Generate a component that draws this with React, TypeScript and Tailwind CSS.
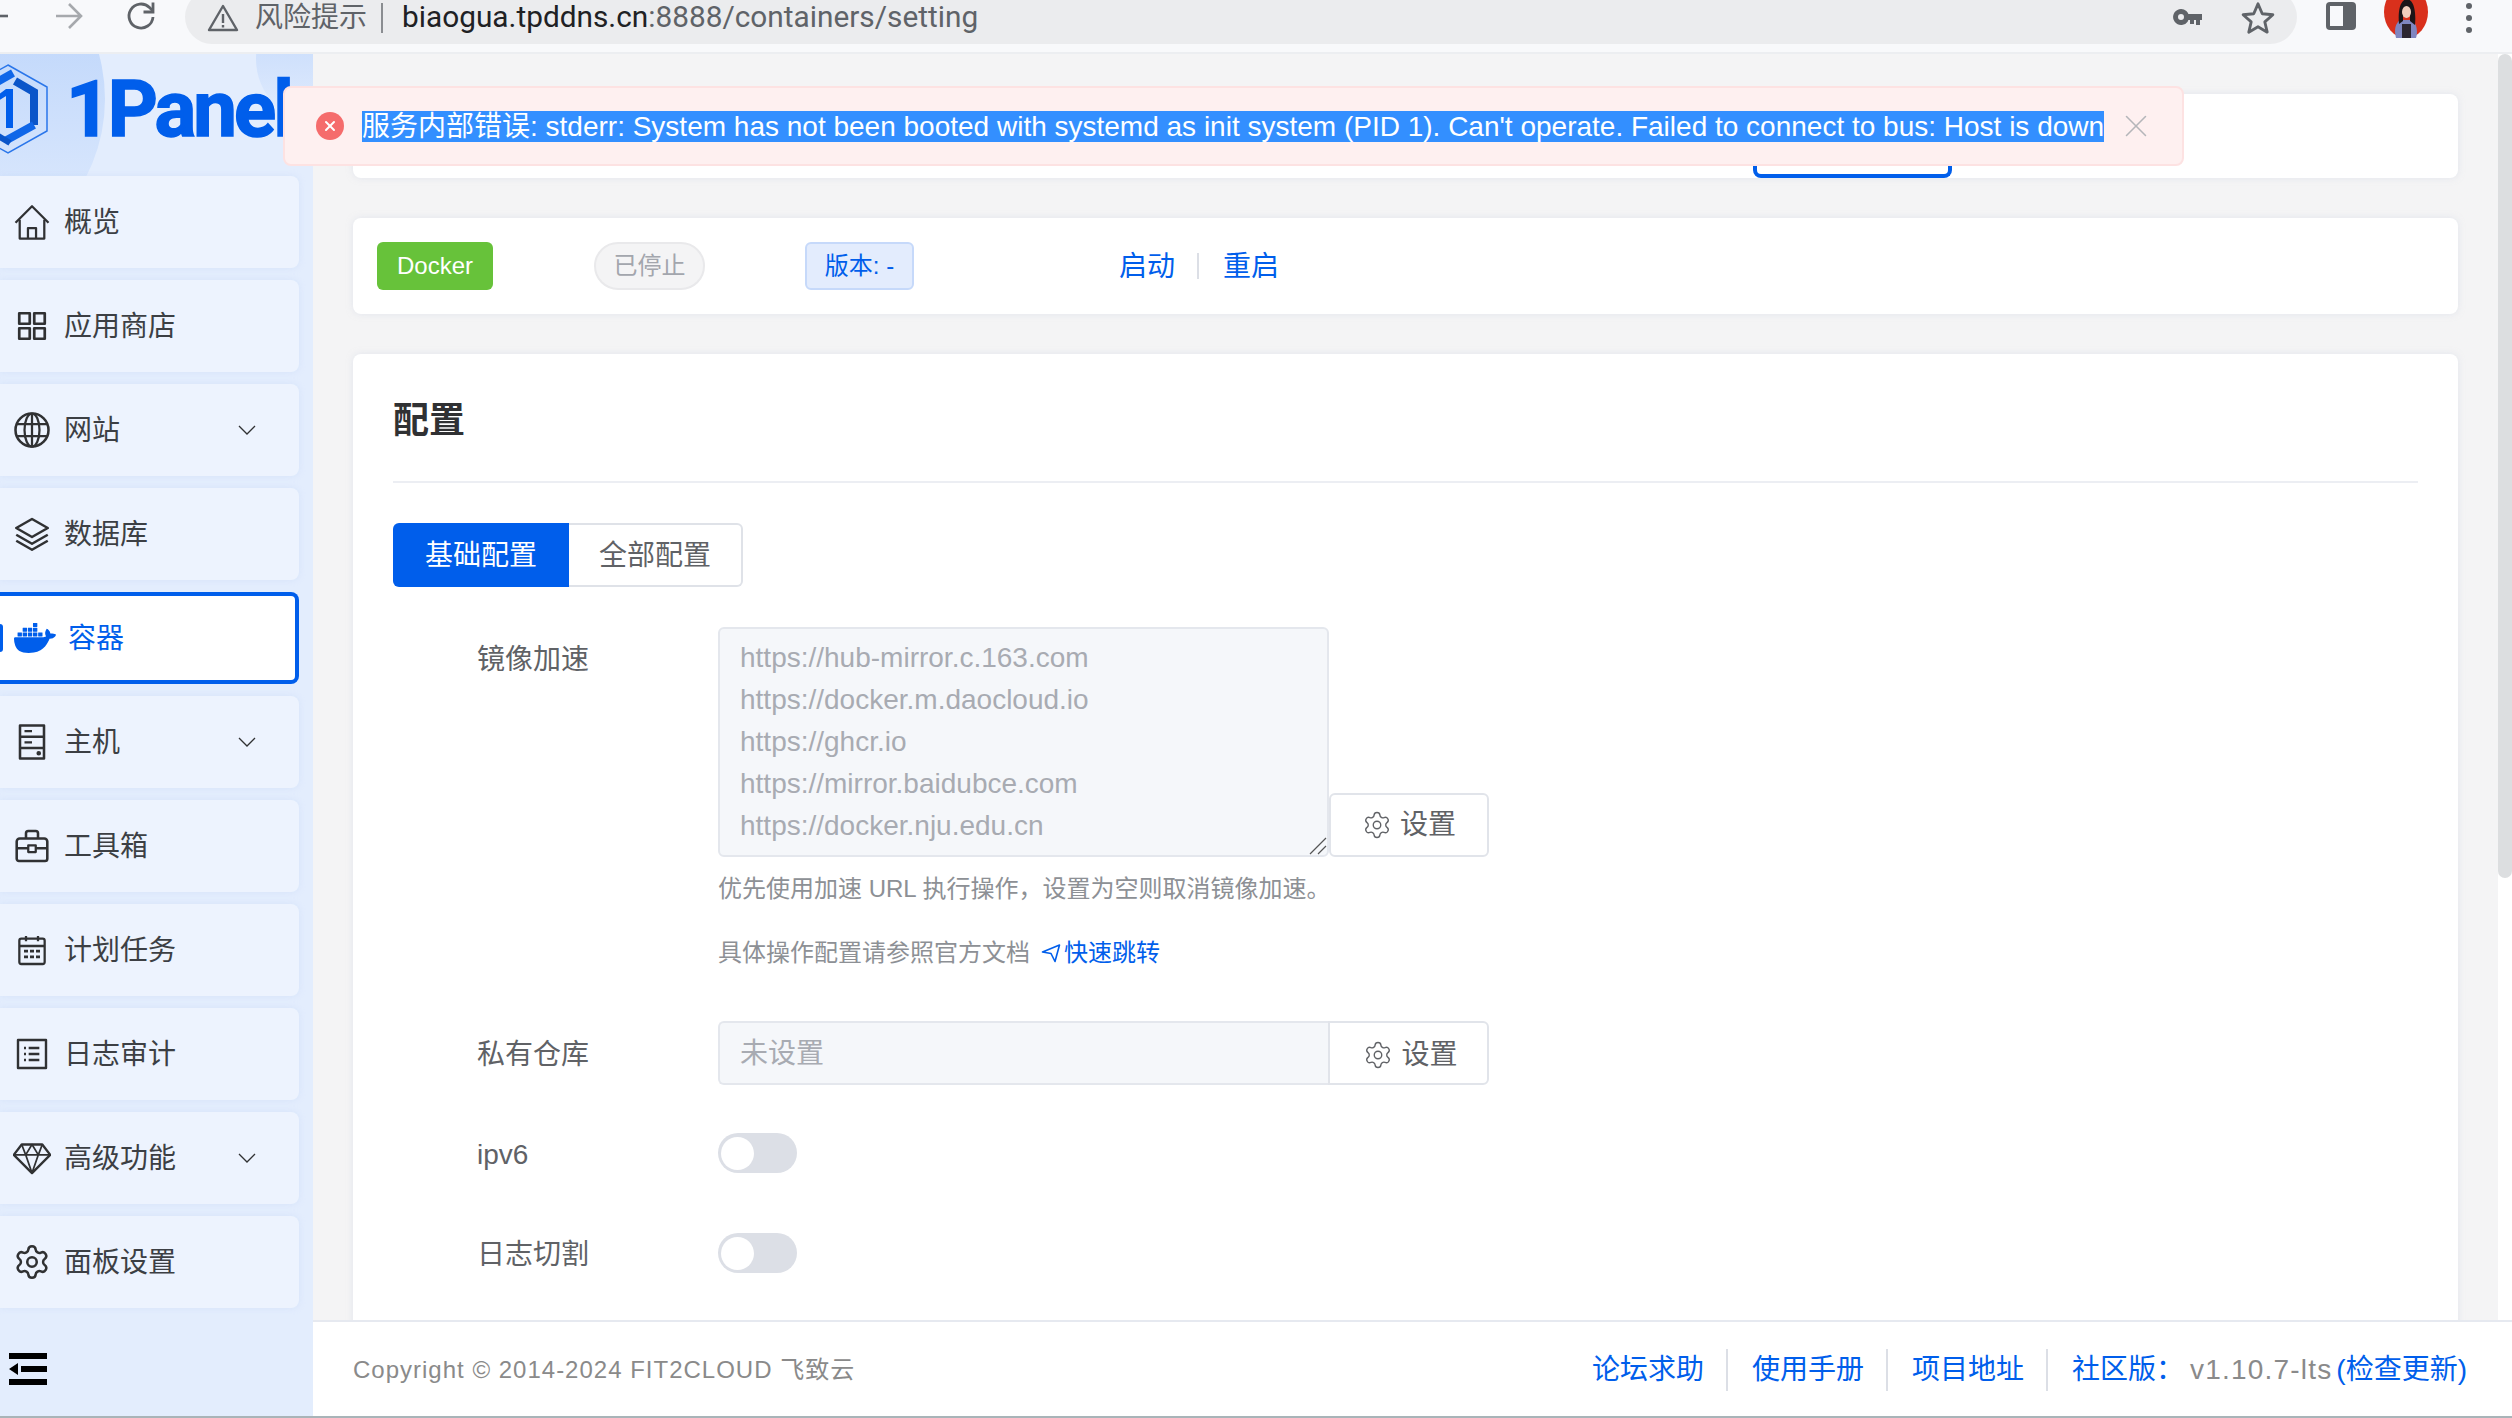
import React from 'react';
import { Settings, X } from 'lucide-react';
import { SiDocker } from 'react-icons/si';

const Icon: React.FC<{ size?: number; children: React.ReactNode }> = ({ size = 36, children }) => (
  <svg
    width={size}
    height={size}
    viewBox="0 0 24 24"
    fill="none"
    stroke="#303133"
    strokeWidth={1.5}
    strokeLinejoin="round"
    className="shrink-0"
  >
    {children}
  </svg>
);

const HomeIcon = () => (
  <Icon>
    <path d="M1 12.5 12 1.5l11 11" />
    <path d="M3.8 10.5V23h16.4V10.5" />
    <path d="M9.3 23v-7h5.4v7" />
  </Icon>
);
const AppsIcon = () => (
  <Icon>
    <path d="M3.5 3.5h7v7h-7zM13.5 3.5h7v7h-7zM3.5 13.5h7v7h-7zM13.5 13.5h7v7h-7z" strokeWidth={1.8} />
  </Icon>
);
const GlobeIcon = () => (
  <Icon>
    <circle cx="12" cy="12" r="11" strokeWidth={1.7} />
    <ellipse cx="12" cy="12" rx="5" ry="11" />
    <path d="M12 1v22M1.5 8h21M1.5 16h21" />
  </Icon>
);
const LayersIcon = () => (
  <Icon>
    <path d="M12 2 22.5 8 12 14 1.5 8z" strokeWidth={1.7} />
    <path d="m1.5 12.5 10.5 6 10.5-6M1.5 16.5l10.5 6 10.5-6" strokeWidth={1.7} />
  </Icon>
);
const HostIcon = () => (
  <Icon>
    <path d="M4 1h16v22H4zM4 8.500h16M4 16h16" strokeWidth={1.7} />
    <path d="M7 4.800h5M7 12.200h5" />
    <circle cx="16.500" cy="19.500" r="0.800" fill="#303133" />
  </Icon>
);
const ToolIcon = () => (
  <Icon>
    <path d="M3.800 7h16.400a2 2 0 0 1 2 2v11.500a1.500 1.500 0 0 1-1.500 1.500H3.300a1.500 1.500 0 0 1-1.500-1.500V9a2 2 0 0 1 2-2z" strokeWidth={1.7} />
    <path d="M8 7V3.500A1.500 1.500 0 0 1 9.500 2h5A1.500 1.500 0 0 1 16 3.500V7M2 13.500h7.500M14.500 13.500H22" strokeWidth={1.7} />
    <path d="M9.500 11.500h5v4.500h-5z" strokeWidth={1.5} />
  </Icon>
);
const CalendarIcon = () => (
  <Icon size={32}>
    <path d="M4 3.500h16a1.500 1.500 0 0 1 1.500 1.500v16A1.500 1.500 0 0 1 20 22.500H4A1.500 1.500 0 0 1 2.500 21V5A1.500 1.500 0 0 1 4 3.500z" strokeWidth={1.7} />
    <path d="M2.500 9h19M7.500 1.500v4M16.500 1.500v4" strokeWidth={1.7} />
    <path d="M6 12.800h3M10.500 12.800h3M15 12.800h3M6 17.200h3M10.500 17.200h3M15 17.200h3" strokeWidth={2} />
  </Icon>
);
const ListIcon = () => (
  <Icon size={32}>
    <path d="M1.500 1.500h21v21h-21z" strokeWidth={1.8} />
    <path d="M9.500 7.500h8M9.500 12h8M9.500 16.500h8M6 7.500h1.500M6 12h1.500M6 16.500h1.500" strokeWidth={1.8} />
  </Icon>
);
const DiamondIcon = () => (
  <Icon size={38}>
    <path d="M5.500 3.500h13l5 6.500L12 21.500.5 10z" strokeWidth={1.5} />
    <path d="M.5 10h23M5.500 3.500 8 10l4 11.500L16 10l2.500-6.500M8 10l4-6.500L16 10" strokeWidth={1.1} />
  </Icon>
);
const ChevronIcon = () => (
  <svg width="18" height="11" viewBox="0 0 18 11" fill="none" stroke="#303133" strokeWidth={1.3} className="absolute right-[43px]">
    <path d="m1 1 8 8 8-8" />
  </svg>
);

interface NavItemProps {
  icon: React.ReactNode;
  label: string;
  arrow?: boolean;
}

const NavItem: React.FC<NavItemProps> = ({ icon, label, arrow }) => (
  <div className="relative flex h-[92px] w-[299px] shrink-0 items-center rounded-r-lg bg-[#edf3fe] shadow-[0_0_6px_rgba(190,210,245,0.35)]">
    <div className="flex w-[64px] justify-center">{icon}</div>
    <span className="pt-[2px] text-[28px] text-[#3c3f44]">{label}</span>
    {arrow && <ChevronIcon />}
  </div>
);

const navBefore: NavItemProps[] = [
  { icon: <HomeIcon />, label: '概览' },
  { icon: <AppsIcon />, label: '应用商店' },
  { icon: <GlobeIcon />, label: '网站', arrow: true },
  { icon: <LayersIcon />, label: '数据库' },
];

const navAfter: NavItemProps[] = [
  { icon: <HostIcon />, label: '主机', arrow: true },
  { icon: <ToolIcon />, label: '工具箱' },
  { icon: <CalendarIcon />, label: '计划任务' },
  { icon: <ListIcon />, label: '日志审计' },
  { icon: <DiamondIcon />, label: '高级功能', arrow: true },
  { icon: <Settings size={38} color="#303133" strokeWidth={1.6} />, label: '面板设置' },
];

const Sidebar = () => (
  <aside className="relative flex w-[313px] shrink-0 flex-col overflow-hidden bg-[#e3edfd]">
    <div className="absolute left-[-235px] top-[-125px] h-[340px] w-[340px] rounded-full bg-linear-to-b from-[#b3cffa] to-[#e3edfd]" />
    <div className="absolute left-[256px] top-[-60px] h-[130px] w-[130px] rounded-full bg-linear-to-b from-[#bdd5fb] to-[#e3edfd]" />
    <div className="relative flex h-[122px] shrink-0 items-center pb-[10px] pl-[66px]">
      <svg width="80" height="90" viewBox="0 0 80 90" fill="none" className="absolute left-[-32px] top-[10px]">
        <path d="M40 1 79 23v44L40 89 1 67V23z" stroke="#2a76ea" strokeWidth="1.5" />
        <path d="M22 22 45 9" stroke="#0f66e8" strokeWidth="8" />
        <path d="M47 17 66 28v33" stroke="#0a55c9" strokeWidth="8" />
        <path d="M66 61 37 77" stroke="#0f66e8" strokeWidth="8" />
        <path d="M38 25h7v39h-7zM30 31l8-6v7l-8 5z" fill="#005eeb" />
        <path d="M20 66 42 79" stroke="#0a55c9" strokeWidth="6" />
      </svg>
      <span className="whitespace-nowrap font-['Roboto',sans-serif] text-[78px] font-bold leading-none tracking-[-3px] text-[#005eeb] [-webkit-text-stroke:1.5px_#005eeb]">
        1Panel
      </span>
    </div>
    <div className="relative flex flex-1 flex-col gap-[12px]">
      {navBefore.map((item) => (
        <NavItem key={item.label} {...item} />
      ))}
      <div className="relative flex h-[92px] w-[299px] shrink-0 items-center rounded-r-lg border-[4px] border-l-0 border-[#005eeb] bg-white">
        <div className="absolute left-0 h-[28px] w-[3px] rounded-r bg-[#005eeb]" />
        <SiDocker size={42} color="#005eeb" className="ml-[14px] shrink-0" />
        <span className="ml-[12px] pt-[2px] text-[28px] text-[#005eeb]">容器</span>
      </div>
      {navAfter.map((item) => (
        <NavItem key={item.label} {...item} />
      ))}
    </div>
    <div className="relative flex h-[96px] shrink-0 items-center pl-[9px] pt-[2px]">
      <svg width="38" height="32" viewBox="0 0 38 32" fill="#000">
        <path d="M0 0h38v6H0zM0 26h38v6H0zM12 13h26v6H12zM0 16l9-6v12z" />
      </svg>
    </div>
  </aside>
);

const SetButton: React.FC<{ className?: string }> = ({ className }) => (
  <div className={`flex h-[64px] shrink-0 items-center justify-center gap-[8px] border-2 border-[#e1e4ea] bg-white text-[28px] text-[#606266] ${className ?? ''}`}>
    <Settings size={30} color="#606266" strokeWidth={1.1} />
    <span className="leading-none">设置</span>
  </div>
);

const Toggle = () => (
  <div className="flex h-[40px] w-[79px] items-center rounded-full bg-[#dcdfe6] pl-[3px]">
    <div className="h-[33px] w-[33px] rounded-full bg-white" />
  </div>
);

const FormLabel: React.FC<{ children: React.ReactNode }> = ({ children }) => (
  <div className="h-[40px] w-[325px] shrink-0 pl-[84px] text-[28px] leading-[44px] text-[#606266]">{children}</div>
);

const mirrors = [
  'https://hub-mirror.c.163.com',
  'https://docker.m.daocloud.io',
  'https://ghcr.io',
  'https://mirror.baidubce.com',
  'https://docker.nju.edu.cn',
];

const FooterLink: React.FC<{ children: React.ReactNode; divider?: boolean }> = ({ children, divider }) => (
  <span className={`whitespace-nowrap text-[#005eeb] ${divider ? 'mr-[24px] border-r-2 border-[#dcdfe6] pr-[22px]' : ''}`}>
    {children}
  </span>
);

const Content = () => (
  <main className="min-w-0 flex-1 overflow-hidden bg-[#f4f4f5] px-[40px] pt-[40px]">
    <div className="flex h-[84px] items-end rounded-lg bg-white pl-[1400px] shadow-[0_0_6px_rgba(210,215,230,0.5)]">
      <div className="h-[20px] w-[199px] rounded-b-lg border-[4px] border-t-0 border-[#005eeb]" />
    </div>

    <div className="mt-[40px] flex h-[96px] items-center rounded-lg bg-white pl-[24px] shadow-[0_0_6px_rgba(210,215,230,0.5)]">
      <div className="flex h-[48px] w-[116px] items-center justify-center rounded-md bg-[#67c23a] text-[24px] text-white">Docker</div>
      <div className="ml-[101px] flex h-[48px] w-[111px] items-center justify-center rounded-full border-2 border-[#e9e9eb] bg-[#f4f4f5] text-[24px] text-[#a3a6ad]">已停止</div>
      <div className="ml-[100px] flex h-[48px] w-[109px] items-center justify-center rounded-md border-2 border-[#c6d9fa] bg-[#e3ecfd] text-[24px] text-[#005eeb]">版本: -</div>
      <span className="ml-[205px] pt-[2px] text-[28px] text-[#005eeb]">启动</span>
      <div className="mx-[22px] h-[26px] w-[2px] bg-[#dcdfe6]" />
      <span className="ml-[2px] pt-[2px] text-[28px] text-[#005eeb]">重启</span>
    </div>

    <div className="mt-[40px] rounded-lg bg-white px-[40px] pt-[44px] pb-[80px] shadow-[0_0_6px_rgba(210,215,230,0.5)]">
      <h2 className="h-[44px] text-[36px] font-bold leading-[46px] text-[#303133]">配置</h2>
      <div className="mt-[39px] h-[2px] bg-[#eceef3]" />

      <div className="mt-[40px] flex h-[64px] w-[350px] text-[28px]">
        <div className="flex w-[176px] items-center justify-center rounded-l-md bg-[#005eeb] pt-[2px] text-white">基础配置</div>
        <div className="flex flex-1 items-center justify-center rounded-r-md border-2 border-l-0 border-[#dfe2e8] pt-[2px] text-[#606266]">全部配置</div>
      </div>

      <div className="mt-[40px] flex">
        <FormLabel><div className="leading-[66px]">镜像加速</div></FormLabel>
        <div>
          <div className="flex items-end">
            <div className="relative h-[230px] w-[611px] rounded-md border-2 border-[#e4e7ed] bg-[#f5f7fa] px-[20px] pt-[8px] text-[28px] leading-[42px] text-[#a8abb2]">
              {mirrors.map((m) => (
                <div key={m}>{m}</div>
              ))}
              <svg width="18" height="18" viewBox="0 0 18 18" stroke="#555" strokeWidth="1.2" className="absolute bottom-0 right-0">
                <path d="M1 17 17 1M9 17l8-8" />
              </svg>
            </div>
            <SetButton className="w-[160px] rounded-md" />
          </div>
          <div className="mt-[16px] text-[24px] leading-[32px] text-[#8d9095]">优先使用加速 URL 执行操作，设置为空则取消镜像加速。</div>
          <div className="mt-[32px] flex items-center text-[24px] leading-[32px] text-[#8d9095]">
            具体操作配置请参照官方文档
            <svg width="20" height="20" viewBox="0 0 20 20" fill="none" stroke="#005eeb" strokeWidth="1.6" strokeLinejoin="round" className="ml-[11px] mr-[3px]">
              <path d="M1.500 9 18.500 2 14 18.500 10 10.500z" />
            </svg>
            <span className="text-[#005eeb]">快速跳转</span>
          </div>
        </div>
      </div>

      <div className="mt-[52px] flex items-center">
        <FormLabel>私有仓库</FormLabel>
        <div className="flex h-[64px] w-[771px]">
          <div className="flex flex-1 items-center rounded-l-md border-2 border-r-0 border-[#e4e7ed] bg-[#f5f7fa] pl-[20px] pt-[2px] text-[28px] text-[#a8abb2]">未设置</div>
          <SetButton className="w-[161px] rounded-r-md pl-[4px] pt-[4px]" />
        </div>
      </div>

      <div className="mt-[48px] flex items-center">
        <FormLabel>ipv6</FormLabel>
        <Toggle />
      </div>

      <div className="mt-[60px] flex items-center">
        <FormLabel>日志切割</FormLabel>
        <Toggle />
      </div>
    </div>
  </main>
);

const BrowserBar = () => (
  <header className="relative flex h-[54px] shrink-0 items-start overflow-hidden border-b-2 border-[#eceef1] bg-[#f8f9fb]">
    <svg width="24" height="30" viewBox="0 0 24 30" fill="none" stroke="#5f6368" strokeWidth="2.6" className="absolute left-[-14px] top-[1px]">
      <path d="M0 15h22" />
    </svg>
    <svg width="30" height="30" viewBox="0 0 30 30" fill="none" stroke="#a6a9ad" strokeWidth="2.6" className="absolute left-[54px] top-[1px]">
      <path d="M2 15h25M15 3l12 12-12 12" />
    </svg>
    <svg width="32" height="32" viewBox="0 0 32 32" fill="none" stroke="#5f6368" strokeWidth="2.8" className="absolute left-[126px] top-0">
      <path d="M27 17a12 12 0 1 1-3.500-9.500L27 11" />
      <path d="M27 2.500V12h-9.500" />
    </svg>
    <div className="ml-[185px] mt-[-10px] flex h-[54px] w-[2112px] items-center rounded-full bg-[#ebecee] pl-[22px] pr-[22px] pt-[10px]">
      <svg width="32" height="30" viewBox="0 0 32 30" fill="none" stroke="#5f6368" strokeWidth="2.4" strokeLinejoin="round" className="mt-[-8px]">
        <path d="M16 3 30 27H2z" />
        <path d="M16 11v9M16 22v2.500" />
      </svg>
      <span className="ml-[16px] mt-[-8px] text-[28px] text-[#5f6368]">风险提示</span>
      <div className="ml-[14px] mt-[-8px] h-[30px] w-[2px] bg-[#8a8d91]" />
      <span className="ml-[19px] mt-[-10px] font-['Roboto',sans-serif] text-[29.8px] leading-none">
        <span className="text-[#202124]">biaogua.tpddns.cn</span>
        <span className="text-[#5f6368]">:8888/containers/setting</span>
      </span>
      <svg width="30" height="20" viewBox="0 0 30 20" fill="#5f6368" className="ml-auto mt-[-8px]">
        <path d="M8 1a8 8 0 1 1-7.500 10.500A8 8 0 0 1 8 1zm0 5a3 3 0 1 0 0 6 3 3 0 0 0 0-6z" fillRule="evenodd" />
        <path d="M14 6h15v6h-2v5h-4v-5h-2v4h-4v-4h-3z" />
      </svg>
      <svg width="34" height="34" viewBox="0 0 24 24" fill="none" stroke="#5f6368" strokeWidth="2" strokeLinejoin="round" className="ml-[38px] mt-[-8px]">
        <path d="m12 2 3 7 7.500.7-5.700 5 1.700 7.300L12 18.200 5.500 22l1.700-7.300-5.700-5L9 9z" />
      </svg>
    </div>
    <svg width="30" height="30" viewBox="0 0 30 30" className="absolute left-[2326px] top-[2px]">
      <rect x="0" y="0" width="30" height="28" rx="4" fill="#5f6368" />
      <rect x="4" y="4" width="13" height="20" fill="#f8f9fb" />
    </svg>
    <svg width="44" height="38" viewBox="0 0 44 38" className="absolute left-[2384px] top-0">
      <ellipse cx="22" cy="12" rx="22" ry="26" fill="#d9301c" />
      <path d="M12 38c-2-8-1-14 4-18l12 0c5 4 6 12 4 18z" fill="#7f86c0" />
      <path d="M18 24h9v14h-9z" fill="#2c2630" />
      <path d="M15 24c-1-10 0-24 8-25 8 1 9 16 8 26l-5-4V9h-7v12z" fill="#1b1518" />
      <ellipse cx="22.500" cy="12" rx="4.500" ry="6" fill="#f1cdbc" />
    </svg>
    <div className="absolute left-[2466px] top-[3px] flex flex-col gap-[6px]">
      <div className="h-[6px] w-[6px] rounded-full bg-[#5f6368]" />
      <div className="h-[6px] w-[6px] rounded-full bg-[#5f6368]" />
      <div className="h-[6px] w-[6px] rounded-full bg-[#5f6368]" />
    </div>
  </header>
);

const ErrorToast = () => (
  <div className="absolute left-[283px] top-[86px] z-10 flex h-[80px] w-[1901px] items-center rounded-lg border-2 border-[#fde2e2] bg-[#fef0f0]">
    <div className="ml-[31px] flex h-[28px] w-[28px] shrink-0 items-center justify-center rounded-full bg-[#f56c6c]">
      <X size={16} color="#fff" strokeWidth={3} />
    </div>
    <span className="ml-[18px] whitespace-nowrap bg-[#338fff] text-[28px] leading-[31px] text-white">
      服务内部错误: stderr: System has not been booted with systemd as init system (PID 1). Can't operate. Failed to connect to bus: Host is down
    </span>
    <X size={38} color="#b4b6ba" strokeWidth={1} className="ml-[13px] shrink-0" />
  </div>
);

export default function App() {
  return (
    <div className="relative flex h-[1418px] w-[2512px] flex-col overflow-hidden bg-white font-['Liberation_Sans','Noto_Sans_CJK_SC',sans-serif]">
      <BrowserBar />
      <ErrorToast />
      <div className="flex min-h-0 flex-1">
        <Sidebar />
        <div className="flex min-w-0 flex-1 flex-col">
          <div className="flex min-h-0 flex-1">
            <Content />
            <div className="w-[14px] shrink-0 bg-white">
              <div className="h-[824px] rounded-full bg-[#dcdee0]" />
            </div>
          </div>
          <footer className="flex h-[96px] shrink-0 items-center justify-between border-t-2 border-[#e6e9f0] bg-white pl-[40px] pr-[45px] pt-[2px]">
            <span className="text-[24px] tracking-[1px] text-[#8a8a8a]">Copyright © 2014-2024 FIT2CLOUD 飞致云</span>
            <div className="flex items-center text-[28px]">
              <FooterLink divider>论坛求助</FooterLink>
              <FooterLink divider>使用手册</FooterLink>
              <FooterLink divider>项目地址</FooterLink>
              <FooterLink>社区版：</FooterLink>
              <span className="ml-[6px] tracking-[1.2px] text-[#8a8a8a]">v1.10.7-lts</span>
              <span className="ml-[4px] text-[#005eeb]">(检查更新)</span>
            </div>
          </footer>
        </div>
      </div>
      <div className="h-[2px] shrink-0 bg-[#a9b4b8]" />
    </div>
  );
}
